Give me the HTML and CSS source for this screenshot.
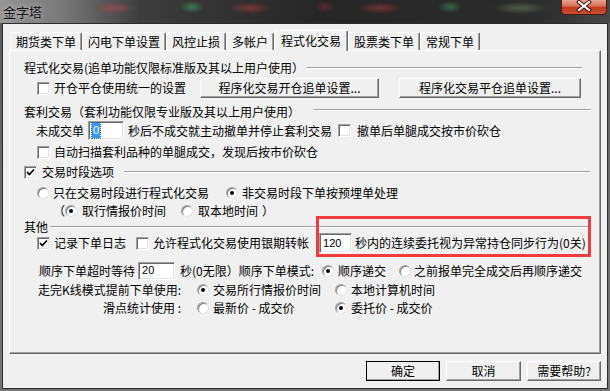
FILE: index.html
```html
<!DOCTYPE html>
<html lang="zh-CN">
<head>
    <meta charset="UTF-8">
    <title>金字塔</title>
    <link rel="stylesheet" href="styles.css">
</head>
<body>
    <div class="window">
        <div class="titlebar">
            <span class="title">金字塔</span>
            <div class="close">
                <svg width="46" height="15" viewBox="0 0 46 15">
                    <path d="M18 3 L28 11 M28 3 L18 11" stroke="#3b120b" stroke-width="4" stroke-linecap="square"/>
                    <path d="M18 3 L28 11 M28 3 L18 11" stroke="#fff" stroke-width="2" stroke-linecap="square"/>
                </svg>
            </div>
        </div>
        <div class="client">
            <div class="tabs">
                <div class="tab">期货类下单</div>
                <div class="tab">闪电下单设置</div>
                <div class="tab">风控止损</div>
                <div class="tab">多帐户</div>
                <div class="tab tab-active">程式化交易</div>
                <div class="tab">股票类下单</div>
                <div class="tab">常规下单</div>
            </div>
            <div class="panel">
                <!-- 程式化交易 -->
                <div class="group-title">
                    <span>程式化交易(追单功能仅限标准版及其以上用户使用）</span>
                    <i class="rule rule-1"></i>
                </div>
                <div class="row row-btns indent">
                    <span class="cb"></span>
                    <span class="lbl">开仓平仓使用统一的设置</span>
                    <span class="btn btn-open">程序化交易开仓追单设置...</span>
                    <span class="btn btn-close">程序化交易平仓追单设置...</span>
                </div>

                <!-- 套利交易 -->
                <div class="group-title gt-2">
                    <span>套利交易（套利功能仅限专业版及其以上用户使用）</span>
                    <i class="rule rule-2"></i>
                </div>
                <div class="row row-arb">
                    <span>未成交单</span>
                    <span class="field field-arb"><span class="sel">0</span></span>
                    <span class="ml-4">秒后不成交就主动撤单并停止套利交易</span>
                    <span class="cb ml-6"></span>
                    <span class="ml-6">撤单后单腿成交按市价砍仓</span>
                </div>
                <div class="row indent row-scan">
                    <span class="cb"></span>
                    <span class="lbl">自动扫描套利品种的单腿成交，发现后按市价砍仓</span>
                </div>

                <!-- 交易时段 -->
                <div class="group-title gt-3">
                    <span class="cb checked"><svg width="11" height="11" viewBox="0 0 11 11"><path d="M2 5 L4.3 7.5 L9 2.5" fill="none" stroke="#000" stroke-width="1.8"/></svg></span>
                    <span class="ml-5">交易时段选项</span>
                    <i class="rule rule-3"></i>
                </div>
                <div class="row indent row-session">
                    <span class="rb"></span>
                    <span class="ml-4">只在交易时段进行程式化交易</span>
                    <span class="rb on ml-17"></span>
                    <span class="ml-4">非交易时段下单按预埋单处理</span>
                </div>
                <div class="row row-time">
                    <span>（</span>
                    <span class="rb on"></span>
                    <span class="ml-5">取行情报价时间</span>
                    <span class="rb ml-15"></span>
                    <span class="ml-5">取本地时间</span>
                    <span class="ml-4">）</span>
                </div>

                <!-- 其他 -->
                <div class="group-title gt-4">
                    <span>其他</span>
                    <i class="rule rule-4"></i>
                </div>
                <div class="row indent row-log">
                    <span class="cb checked"><svg width="11" height="11" viewBox="0 0 11 11"><path d="M2 5 L4.3 7.5 L9 2.5" fill="none" stroke="#000" stroke-width="1.8"/></svg></span>
                    <span class="ml-4">记录下单日志</span>
                    <span class="cb ml-10"></span>
                    <span class="ml-4">允许程式化交易使用银期转帐</span>
                    <span class="field field-sync">120</span>
                    <span class="ml-3">秒内的连续委托视为异常持仓同步行为(0关)</span>
                </div>
                <div class="row row-seq">
                    <span>顺序下单超时等待</span>
                    <span class="field field-wait">20</span>
                    <span class="ml-5">秒(0无限）顺序下单模式:</span>
                    <span class="rb on ml-8"></span>
                    <span class="ml-4">顺序递交</span>
                    <span class="rb ml-13"></span>
                    <span class="ml-3">之前报单完全成交后再顺序递交</span>
                </div>
                <div class="row indent row-kline">
                    <span class="key">走完K线模式提前下单使用:</span>
                    <span class="opt opt-first"><span class="rb on"></span><span>交易所行情报价时间</span></span>
                    <span class="opt"><span class="rb"></span><span>本地计算机时间</span></span>
                </div>
                <div class="row indent row-slip">
                    <span class="key">滑点统计使用 :</span>
                    <span class="opt opt-first"><span class="rb"></span><span>最新价 - 成交价</span></span>
                    <span class="opt"><span class="rb on"></span><span>委托价 - 成交价</span></span>
                </div>

                <div class="highlight"></div>
            </div>
            <div class="footer">
                <span class="btn btn-ok">确定</span>
                <span class="btn btn-cancel">取消</span>
                <span class="btn btn-help">需要帮助?</span>
            </div>
        </div>
    </div>
</body>
</html>
```

FILE: styles.css
```css
body {
    margin: 0;
    font-family: "Noto Sans CJK SC", "Noto Sans", sans-serif;
    font-size: 12px;
    line-height: 16px;
    color: #000;
}
.window {
    width: 610px;
    height: 391px;
    box-sizing: border-box;
    padding: 0 2px 2px;
    display: flex;
    flex-direction: column;
    background: linear-gradient(180deg, #5a5a5a, #6e6e6e 60%, #767676);
    overflow: hidden;
}
.titlebar {
    height: 23px;
    flex: none;
    margin: 0 -2px;
    padding-left: 3px;
    display: flex;
    align-items: center;
    position: relative;
    background:
        radial-gradient(ellipse 22px 6px at 115px 8px, rgba(190, 70, 70, 0.55), transparent),
        radial-gradient(ellipse 12px 6px at 192px 7px, rgba(60, 170, 90, 0.6), transparent),
        radial-gradient(ellipse 22px 6px at 250px 8px, rgba(190, 60, 60, 0.5), transparent),
        radial-gradient(ellipse 10px 6px at 325px 7px, rgba(170, 50, 50, 0.4), transparent),
        radial-gradient(ellipse 22px 6px at 380px 8px, rgba(190, 60, 60, 0.5), transparent),
        radial-gradient(ellipse 12px 6px at 450px 7px, rgba(60, 170, 90, 0.5), transparent),
        radial-gradient(ellipse 28px 6px at 520px 8px, rgba(130, 150, 110, 0.45), transparent),
        linear-gradient(90deg, #959595 0, #7a7a7a 60px, #3d3d3d 140px, #262626 320px, #2c2c2c 540px, #484848 610px);
}
.title {
    font-size: 13px;
    color: #111;
    text-shadow: 0 0 5px rgba(255, 255, 255, 0.6);
}
.close {
    position: absolute;
    top: 0;
    left: 561px;
    width: 46px;
    height: 15px;
    box-sizing: border-box;
    border: 1px solid #4a1a12;
    border-top: none;
    border-radius: 0 0 4px 4px;
    background: linear-gradient(180deg, #e7a696 0, #d6735c 40%, #c23a1f 55%, #c6502f 100%);
}
.close svg {
    position: absolute;
    top: -1px;
    left: -1px;
}
.client {
    flex: 1;
    border: 1px solid #2b2b2b;
    background: #f0f0f0;
    display: flex;
    flex-direction: column;
}

/* tabs */
.tabs {
    display: flex;
    align-items: flex-end;
    height: 21px;
    margin: 6px 0 0 7px;
    position: relative;
    z-index: 1;
}
.tab {
    height: 18px;
    margin-bottom: 1px;
    padding: 0 5px;
    box-sizing: border-box;
    border-top: 1px solid #fff;
    border-left: 1px solid #fff;
    border-right: 1px solid #696969;
    border-radius: 2px 2px 0 0;
    box-shadow: inset -1px 0 #a0a0a0;
    line-height: 17px;
    white-space: nowrap;
}
.tab-active {
    height: 21px;
    margin-bottom: 0;
    padding: 0 6px;
    background: #f0f0f0;
    line-height: 19px;
}

/* panel */
.panel {
    position: relative;
    height: 304px;
    margin: -1px 6px 0;
    padding-top: 8px;
    box-sizing: border-box;
    border: 1px solid;
    border-color: #fff #696969 #696969 #fff;
    box-shadow: inset -1px -1px #a0a0a0;
}
.group-title {
    display: flex;
    align-items: center;
    height: 18px;
    padding-left: 14px;
    white-space: nowrap;
}
.rule {
    flex: 1;
    height: 0;
    border-top: 1px solid #a0a0a0;
    border-bottom: 1px solid #fff;
}
.rule-1 { margin: 0 18px 0 3px; }
.rule-2 { margin: -5px 9px 0 14px; }
.rule-3 { margin: 0 10px 0 10px; }
.rule-4 { margin: 0 10px 0 2px; }
.gt-2 { margin-top: 4px; }
.gt-3 { margin-top: 2px; }
.gt-4 { height: 12px; margin-top: 1px; }

.row {
    display: flex;
    align-items: center;
    height: 18px;
    white-space: nowrap;
}
.indent { padding-left: 27px; }
.row-btns { height: 22px; }
.row-arb { height: 19px; padding-left: 26px; }
.row-scan { margin-top: 3px; }
.row-session { margin-top: 3px; }
.row-time { padding-left: 43px; }
.row-log { height: 20px; }
.row-seq { height: 20px; margin-top: 8px; padding-left: 29px; }

.lbl { margin-left: 4px; }
.ml-3 { margin-left: 3px; }
.ml-4 { margin-left: 4px; }
.ml-5 { margin-left: 5px; }
.ml-6 { margin-left: 6px; }
.ml-8 { margin-left: 8px; }
.ml-10 { margin-left: 10px; }
.ml-13 { margin-left: 13px; }
.ml-15 { margin-left: 15px; }
.ml-17 { margin-left: 17px; }

/* controls */
.cb {
    flex: none;
    width: 13px;
    height: 13px;
    box-sizing: border-box;
    border: 1px solid;
    border-color: #a0a0a0 #fff #fff #a0a0a0;
    box-shadow: inset 1px 1px #696969, inset -1px -1px #e3e3e3;
    background: #fff;
    position: relative;
}
.cb svg {
    position: absolute;
    top: 0;
    left: 0;
}
.rb {
    flex: none;
    width: 12px;
    height: 12px;
    box-sizing: border-box;
    border-radius: 50%;
    border: 1px solid;
    border-color: #a0a0a0 #e3e3e3 #e3e3e3 #a0a0a0;
    box-shadow: inset 1px 1px #808080;
    background: #fff;
    position: relative;
}
.rb.on::after {
    content: "";
    position: absolute;
    top: 3px;
    left: 3px;
    width: 4px;
    height: 4px;
    border-radius: 50%;
    background: #000;
}
.field {
    flex: none;
    box-sizing: border-box;
    background: #fff;
    border: 1px solid;
    border-color: #a0a0a0 #fff #fff #a0a0a0;
    box-shadow: inset 1px 1px #696969, inset -1px -1px #e3e3e3;
    padding-left: 3px;
    font-family: "Liberation Sans", Arial, sans-serif;
    font-size: 11px;
    line-height: 15px;
}
.field-arb { width: 36px; height: 19px; margin-left: 4px; padding-top: 1px; }
.field-sync { width: 33px; height: 20px; margin-left: 10px; line-height: 18px; }
.field-wait { width: 37px; height: 18px; margin-left: 3px; }
.sel {
    display: inline-block;
    padding: 0 1px;
    background: #3399ff;
    color: #fff;
    outline: 1px dotted #1c63b8;
}
.key {
    width: 144px;
    text-align: right;
}
.opt {
    display: flex;
    align-items: center;
    gap: 4px;
    margin-left: 16px;
}
.opt-first { width: 122px; }

.btn {
    flex: none;
    display: flex;
    align-items: center;
    justify-content: center;
    height: 20px;
    box-sizing: border-box;
    border: 1px solid;
    border-color: #fff #696969 #696969 #fff;
    box-shadow: inset -1px -1px #a0a0a0;
    background: #f0f0f0;
}
.btn-open { width: 179px; margin-left: 14px; }
.btn-close { width: 182px; margin-left: 20px; }

.highlight {
    position: absolute;
    left: 306px;
    top: 165px;
    width: 275px;
    height: 41px;
    box-sizing: border-box;
    border: 3px solid #f03c3c;
}

/* footer buttons */
.footer {
    display: flex;
    justify-content: flex-end;
    gap: 6px;
    padding: 7px 6px 0 0;
}
.btn-ok {
    width: 74px;
    outline: 1px solid #000;
    outline-offset: -1px;
    border-color: #fff #404040 #404040 #fff;
}
.btn-cancel { width: 75px; }
.btn-help { width: 74px; }
```
